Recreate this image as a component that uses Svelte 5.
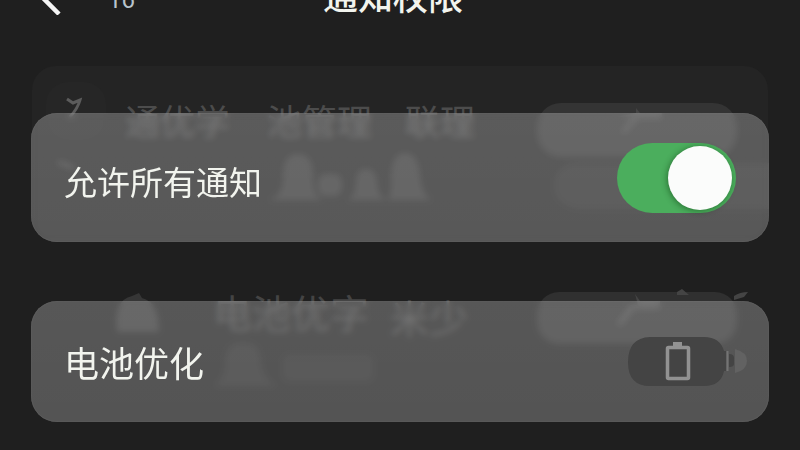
<script>
	let allowAll = $state(true);
</script>

<svelte:head>
	<title>通知权限</title>
</svelte:head>

<div class="screen">
	<!-- faded rows of the page underneath, seen through the cards -->
	<svg class="backdrop" viewBox="0 0 800 450" aria-hidden="true">
		<rect x="32" y="66" width="736" height="176" rx="24" fill="#242424" />
		<rect x="46" y="82" width="60" height="60" rx="22" fill="#262626" />
		<g fill="none" stroke="#5c5c5c" stroke-width="3">
			<path d="M67 99l6 4 7-3q-2 8-10 17" />
			<path d="M58 162l16 6" stroke="#444" />
		</g>
		<g class="ghost-text">
			<text x="125" y="135">通优学</text>
			<text x="267" y="135">池管理</text>
			<text x="405" y="135">联理</text>
			<text x="213" y="328" class="wide">电池优字</text>
			<text x="390" y="333" class="wide">米少</text>
		</g>
		<rect x="537" y="103" width="200" height="54" rx="24" fill="#343434" />
		<path d="M769 163H574q-20 4-20 22 0 20 24 24h191z" fill="#2b2b2b" />
		<rect x="537" y="292" width="200" height="52" rx="22" fill="#303030" />
		<g fill="#444">
			<path d="M636 108l4 5h22v6h-24l-12 14h-6l12-16h-16l20-4z" />
			<path d="M635 294l5 7h20v8h-26l-12 16h-6l14-20h8z" />
			<path d="M677 292l5-3 7 6h-12zM734 296q6-4 14-4l-4 5-10 3z" />
		</g>
		<g fill="#363636">
			<path d="M268 200q16-4 15-24 0-22 15-22t15 22q-1 20 10 24z" />
			<rect x="318" y="174" width="24" height="22" rx="8" />
			<path d="M347 200q9-4 9-18 0-13 10-13t11 13q0 14 10 18z" />
			<path d="M387 200q5-4 4-24 1-23 14-23t15 23q2 20 12 24z" />
			<path d="M214 386q12-8 11-28 2-16 18-16t18 16q0 20 16 28z" fill="#282828" />
			<rect x="282" y="354" width="92" height="28" rx="8" fill="#252525" />
		</g>
		<path d="M117 332q-4-32 15-36l7-3 3 5q17 4 17 34z" fill="#363636" />
	</svg>

	<header>
		<button class="back" aria-label="返回">
			<svg width="32" height="54" viewBox="0 0 32 54">
				<path d="M29 3L4 28l25 25" fill="none" stroke="#f4f4f4" stroke-width="4.5" />
			</svg>
		</button>
		<span class="count">16</span>
		<h1>通知权限</h1>
	</header>

	<main>
		<section class="card notify">
			<label for="allow">允许所有通知</label>
			<input id="allow" type="checkbox" role="switch" bind:checked={allowAll} />
		</section>

		<section class="card battery">
			<h2>电池优化</h2>
			<button class="battery-button" aria-label="电池优化">
				<svg width="120" height="50" viewBox="0 0 120 50">
					<path d="M107 12q12 3 12 12t-12 12z" fill="#626262" />
					<path d="M22 0h54q16 0 20 14h2v20h-2q-3 15-20 15H22Q0 49 0 25T22 0z" fill="#444" />
					<path d="M99.500 14v20" stroke="#747474" stroke-width="2" />
					<path d="M101 17q5 0 5 4v6q0 3-5 3z" fill="#444" />
					<rect x="39.500" y="10.500" width="21" height="31" rx="1" fill="none" stroke="#929292" stroke-width="3.500" />
					<path d="M45 5h9v5h-9z" fill="#929292" />
				</svg>
			</button>
		</section>
	</main>
</div>

<style>
	:global(body) {
		margin: 0;
		background: #1f1f1f;
	}
	.screen {
		position: relative;
		min-height: 100vh;
		overflow: hidden;
		color: #f2f4ee;
		font-family: "Noto Sans CJK SC", "Noto Sans", sans-serif;
	}
	.backdrop {
		position: absolute;
		top: 0;
		left: 0;
		width: 100%;
	}
	.ghost-text {
		fill: #4c4c4c;
		font-size: 35px;
	}
	.wide {
		fill: #444;
		font-size: 39px;
	}
	/* the title bar is scrolled partly out of view */
	header {
		display: grid;
		grid-template-columns: 1fr auto 1fr;
		align-items: end;
		align-content: end;
		height: 15px;
		padding: 0 30px;
		position: relative;
	}
	.back {
		grid-column: 1;
		grid-row: 1;
		justify-self: start;
		display: flex;
		padding: 0;
		border: 0;
		background: none;
		cursor: pointer;
	}
	.count {
		grid-column: 1;
		grid-row: 1;
		margin-left: 78px;
		padding-bottom: 5px;
		color: #b8c4cc;
		font: 24px/20px Roboto, sans-serif;
	}
	h1 {
		grid-column: 2;
		grid-row: 1;
		margin: 0 14px 0 0;
		font-size: 35px;
		line-height: 40px;
		font-weight: 500;
	}
	main {
		display: flex;
		flex-direction: column;
		gap: 59px;
		padding: 98px 31px 28px;
	}
	.card {
		display: flex;
		align-items: center;
		justify-content: space-between;
		box-sizing: border-box;
		padding: 0 33px;
		border-radius: 26px;
		background: linear-gradient(rgba(255, 255, 255, .25), rgba(255, 255, 255, .24));
		backdrop-filter: blur(3px);
		box-shadow: inset 0 0 1px rgba(255, 255, 255, .3);
	}
	.notify {
		min-height: 129px;
	}
	.battery {
		min-height: 121px;
	}
	label {
		font-size: 33px;
		line-height: 40px;
		padding-top: 6px;
	}
	h2 {
		margin: 0;
		font-size: 35px;
		line-height: 40px;
		font-weight: 400;
	}
	input {
		appearance: none;
		display: flex;
		align-items: center;
		box-sizing: border-box;
		width: 119px;
		height: 70px;
		margin: 0;
		padding: 0 4px;
		border-radius: 35px;
		background: #777;
		cursor: pointer;
	}
	input::before {
		content: "";
		width: 64px;
		height: 64px;
		border-radius: 50%;
		background: #fbfcfb;
		box-shadow: -1px 1px 6px rgba(0, 40, 0, .45);
	}
	input:checked {
		justify-content: flex-end;
		background: #4bae5d;
	}
	.battery-button {
		display: flex;
		margin-right: -12px;
		padding: 0;
		border: 0;
		background: none;
		cursor: pointer;
	}
</style>
